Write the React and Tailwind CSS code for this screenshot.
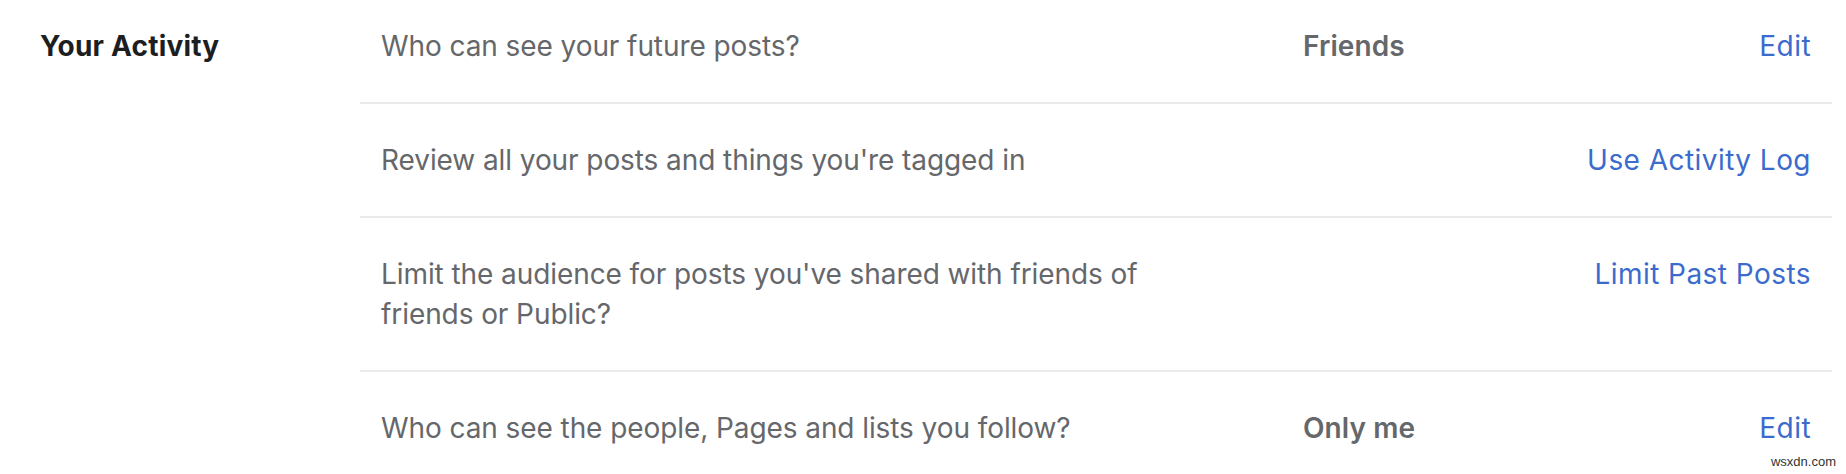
const rows = [
  { text: "Who can see your future posts?", value: "Friends", action: "Edit", first: true },
  { text: "Review all your posts and things you're tagged in", action: "Use Activity Log" },
  { text: "Limit the audience for posts you've shared with friends of friends or Public?", action: "Limit Past Posts" },
  { text: "Who can see the people, Pages and lists you follow?", value: "Only me", action: "Edit", last: true },
];

function Row({ text, value, action, first, last }) {
  return (
    <div
      className={
        "flex items-start px-[21px] leading-[40px] " +
        (first ? "pt-[26px] pb-[36px] " : "py-[36px] ") +
        (last ? "" : "border-b-2 border-[#ebebeb]")
      }
    >
      <div className="w-[922px] shrink-0">
        <div className="max-w-[800px] text-[#65676b]">{text}</div>
      </div>
      <div className="w-[240px] shrink-0 font-semibold tracking-[0.1px] text-[#65676b]">{value}</div>
      <div className="flex-1 text-right tracking-[0.45px] text-[#3b6bcd]">{action}</div>
    </div>
  );
}

export default function App() {
  return (
    <div className="relative h-[474px] w-[1846px] overflow-hidden bg-white font-['Inter',sans-serif] text-[28px] tracking-[-0.08px]">
      <div className="flex">
        <div className="w-[360px] shrink-0 pl-[40px] pt-[26px] leading-[40px] font-bold tracking-[0.2px] text-[#1c1e21]">
          Your Activity
        </div>
        <div className="w-[1472px] shrink-0">
          {rows.map((r, i) => (
            <Row key={i} {...r} />
          ))}
        </div>
      </div>
      <div className="absolute bottom-[3px] right-[10px] font-['Liberation_Sans',sans-serif] text-[13px] tracking-normal text-[#333]">
        wsxdn.com
      </div>
    </div>
  );
}
